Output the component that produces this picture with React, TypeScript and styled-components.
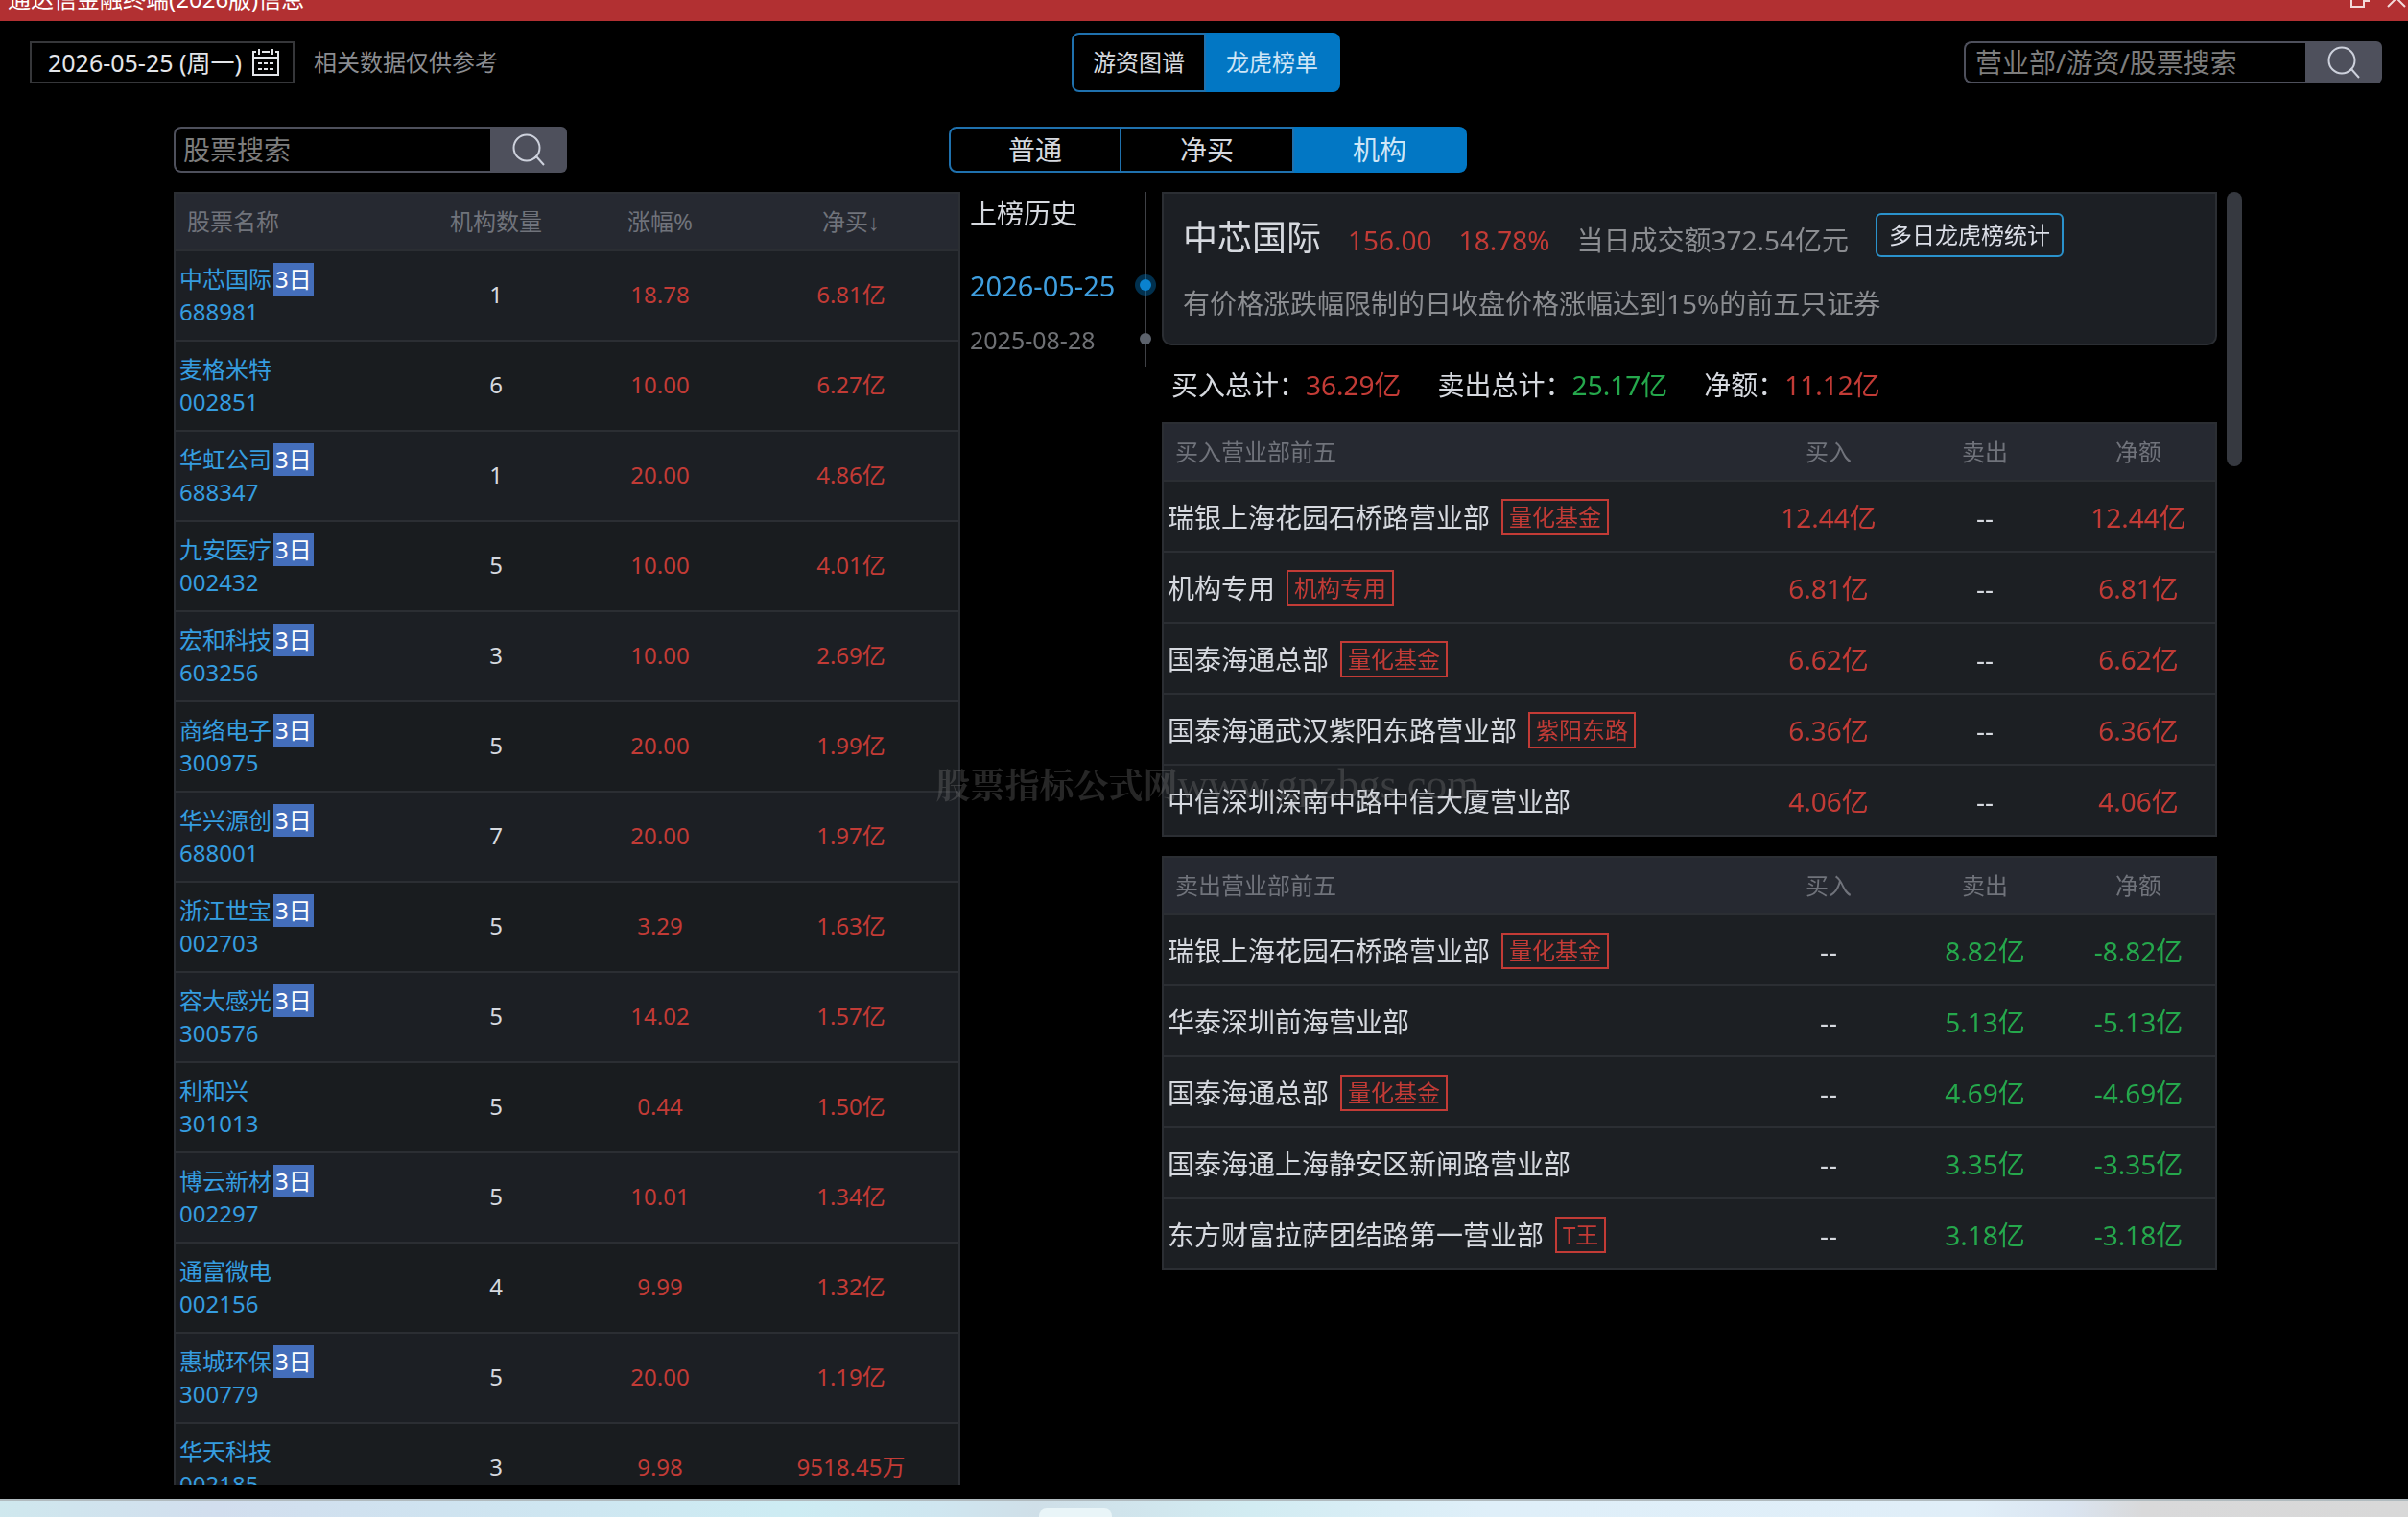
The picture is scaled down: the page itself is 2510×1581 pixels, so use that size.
import React from 'react';
import styled, { createGlobalStyle } from 'styled-components';

const color = {
  up: '#c23b36',
  down: '#25a84c',
  text: '#d6d9df',
  muted: '#8b8d91',
  head: '#70737b',
  link: '#359de0',
  line: '#2b2e33',
  primary: '#0277c4',
  outline: '#1f71ae',
  field: '#4e505c',
};

const GlobalStyle = createGlobalStyle`
  *, *::before, *::after { box-sizing: border-box; }
  body { margin: 0; background: #000; }
  button, input { font: inherit; }
  button { cursor: pointer; }
`;

const Page = styled.div`
  display: flex;
  flex-direction: column;
  height: 100vh;
  overflow: hidden;
  background: #000;
  color: ${color.text};
  font-family: 'Noto Sans', 'Noto Sans CJK SC', sans-serif;
  font-size: 24px;
  line-height: 34px;
`;

const TitleBar = styled.div`
  display: flex;
  flex: none;
  justify-content: space-between;
  align-items: flex-end;
  height: 22px;
  padding: 0 2px 6px 8px;
  overflow: hidden;
  background: #b23032;
  color: #fff;
`;

const WindowButtons = styled.div`
  display: flex;
  gap: 18px;
`;

const WindowButton = styled.button`
  display: flex;
  padding: 0 0 8px;
  border: 0;
  background: none;
  color: #f3dada;
`;

const Header = styled.header`
  display: grid;
  flex: none;
  grid-template-columns: 1fr auto 1fr;
  align-items: center;
  padding: 12px 27px 36px 31px;
`;

const DateGroup = styled.div`
  display: flex;
  align-items: center;
  gap: 20px;
`;

const DateButton = styled.button`
  display: flex;
  align-items: center;
  justify-content: space-between;
  width: 276px;
  height: 44px;
  padding: 0 14px 0 17px;
  border: 2px solid #36373a;
  background: #000;
  color: #e4e6ea;
  font-size: 25px;
  white-space: nowrap;
`;

const Note = styled.span`
  color: ${color.muted};
`;

const Segments = styled.div<{ $large?: boolean }>`
  display: flex;
  font-size: ${(p) => (p.$large ? 28 : 24)}px;
`;

const Segment = styled.button<{ $active?: boolean; $width: number; $height: number }>`
  width: ${(p) => p.$width}px;
  height: ${(p) => p.$height}px;
  padding: 0;
  border: 2px solid ${(p) => (p.$active ? color.primary : color.outline)};
  border-left-width: 0;
  background: ${(p) => (p.$active ? color.primary : '#000')};
  color: ${(p) => (p.$active ? '#cfe6f7' : color.text)};

  &:first-child {
    border-left-width: 2px;
    border-radius: 8px 0 0 8px;
  }
  &:last-child { border-radius: 0 8px 8px 0; }
`;

const SearchBox = styled.form<{ $width: number; $height: number }>`
  display: flex;
  width: ${(p) => p.$width}px;
  height: ${(p) => p.$height}px;
  font-size: 28px;
`;

const SearchInput = styled.input<{ $inset: number }>`
  flex: 1;
  min-width: 0;
  padding: 0 0 0 ${(p) => p.$inset}px;
  border: 2px solid ${color.field};
  border-right: 0;
  border-radius: 8px 0 0 8px;
  outline: 0;
  background: #000;
  color: ${color.text};

  &::placeholder { color: #7d7d7d; opacity: 1; }
`;

const SearchButton = styled.button`
  display: flex;
  align-items: center;
  justify-content: center;
  width: 80px;
  padding: 0;
  border: 0;
  border-radius: 0 6px 6px 0;
  background: ${color.field};
  color: #cdd1dc;
`;

const Tools = styled.div`
  display: grid;
  flex: none;
  grid-template-columns: 1fr auto 1fr;
  padding: 0 173px 20px 181px;
`;

const Main = styled.main`
  display: grid;
  flex: 1;
  grid-template-columns: minmax(0, 820fr) 210px minmax(0, 1126fr);
  min-height: 0;
  padding: 0 173px 14px 181px;
`;

const StockList = styled.section`
  min-height: 0;
  overflow: auto;
  border: 2px solid ${color.line};
  border-bottom: 0;
  scrollbar-width: none;
`;

const Table = styled.table`
  width: 100%;
  border-collapse: separate;
  border-spacing: 0;
  table-layout: fixed;
`;

const HeadCell = styled.th<{ $first?: boolean; $width?: number }>`
  width: ${(p) => (p.$width ? `${p.$width}px` : 'auto')};
  height: 60px;
  padding: ${(p) => (p.$first ? '0 0 0 12px' : '0')};
  border-bottom: 2px solid ${color.line};
  background: #262931;
  color: ${color.head};
  font-weight: 400;
  text-align: ${(p) => (p.$first ? 'left' : 'center')};
`;

const SortArrow = styled.span`
  font-family: 'Liberation Sans', sans-serif;
`;

const StockRow = styled.tr`
  background: #1c1f24;

  &:nth-child(even) { background: #191c1f; }
`;

const StockCell = styled.td<{ $tone?: string }>`
  height: 94px;
  padding: 0 0 2px;
  border-bottom: 2px solid ${color.line};
  color: ${(p) => p.$tone ?? color.text};
  text-align: center;
`;

const StockName = styled.td`
  padding: 12px 0 12px 4px;
  border-bottom: 2px solid ${color.line};
`;

const StockLink = styled.a`
  display: block;
  color: ${color.link};
  text-decoration: none;
`;

const NameLine = styled.span`
  display: flex;
`;

const DaysBadge = styled.span`
  margin-left: 2px;
  padding: 0 2px;
  background: #446ebb;
  color: #fff;
`;

const History = styled.aside`
  position: relative;
  align-self: start;
  height: 182px;
  padding: 4px 16px 0 10px;

  &::after {
    content: '';
    position: absolute;
    top: 0;
    right: 16px;
    width: 2px;
    height: 100%;
    background: #3f4146;
  }
`;

const HistoryTitle = styled.h2`
  margin: 0 0 40px;
  font-size: 28px;
  font-weight: 400;
  line-height: 36px;
`;

const HistoryDates = styled.ul`
  display: flex;
  flex-direction: column;
  gap: 20px;
  margin: 0;
  padding: 0;
  list-style: none;
`;

const HistoryItem = styled.li`
  position: relative;
  display: flex;
  height: 36px;
`;

const HistoryButton = styled.button<{ $active?: boolean }>`
  padding: 0;
  border: 0;
  background: none;
  color: ${(p) => (p.$active ? '#3f9fe0' : '#6f7175')};
  font-size: ${(p) => (p.$active ? 29 : 25)}px;
  line-height: 36px;
`;

const HistoryDot = styled.i<{ $active?: boolean }>`
  position: absolute;
  z-index: 1;
  top: 11px;
  right: -5px;
  width: 12px;
  height: 12px;
  border-radius: 50%;
  background: ${(p) => (p.$active ? '#0a82cf' : '#5c626c')};
  box-shadow: ${(p) => (p.$active ? '0 0 0 5px rgba(2, 119, 196, 0.4)' : 'none')};
`;

const Detail = styled.section`
  display: flex;
  gap: 10px;
  min-height: 0;
`;

const DetailBody = styled.div`
  flex: 1;
  min-width: 0;
`;

const ScrollThumb = styled.div`
  flex: none;
  width: 16px;
  height: 286px;
  border-radius: 8px;
  background: #363940;
`;

const Card = styled.div`
  height: 160px;
  padding: 20px 20px 0;
  border: 2px solid ${color.line};
  border-radius: 0 0 10px 10px;
  background: #1c1f24;
  font-size: 28px;
`;

const CardTop = styled.div`
  display: flex;
  gap: 28px;
  white-space: nowrap;
`;

const Quote = styled.div`
  display: flex;
  align-items: baseline;
  gap: 28px;
  line-height: 52px;
`;

const CardTitle = styled.h1`
  margin: 0;
  font-size: 36px;
  font-weight: 400;
`;

const Tone = styled.span<{ $tone: string }>`
  color: ${(p) => p.$tone};
`;

const StatsButton = styled.button`
  height: 46px;
  padding: 0 12px;
  border: 2px solid #2a92cc;
  border-radius: 6px;
  background: none;
  color: #dcdfe8;
  font-size: 24px;
`;

const Reason = styled.p`
  margin: 22px 0 0;
  color: ${color.muted};
  line-height: 36px;
`;

const Totals = styled.div`
  display: flex;
  align-items: center;
  gap: 38px;
  height: 80px;
  padding: 2px 0 0 10px;
  font-size: 28px;
  white-space: nowrap;
`;

const BrokerPanel = styled.div`
  border: 2px solid ${color.line};
  border-bottom: 0;

  & + & { margin-top: 20px; }
`;

const BrokerCell = styled.td<{ $tone?: string }>`
  height: 74px;
  padding: 2px 0 0;
  border-bottom: 2px solid ${color.line};
  background: #1c1f23;
  color: ${(p) => p.$tone ?? color.text};
  font-size: 28px;
  text-align: center;
`;

const BrokerName = styled(BrokerCell)`
  padding-left: 4px;
  text-align: left;
`;

const BrokerLine = styled.div`
  display: flex;
  align-items: flex-end;
  gap: 12px;
  line-height: 38px;
  white-space: nowrap;
`;

const Tag = styled.span`
  padding: 0 6px;
  border: 2px solid ${color.up};
  color: ${color.up};
  font-size: 24px;
  line-height: 34px;
`;

const Watermark = styled.div`
  position: fixed;
  top: 794px;
  left: 8px;
  right: 0;
  color: rgba(140, 140, 140, 0.28);
  font-family: 'Liberation Serif', 'Noto Serif CJK SC', 'Noto Sans CJK SC', serif;
  font-size: 36px;
  line-height: 48px;
  text-align: center;
  pointer-events: none;
`;

const WatermarkName = styled.span`
  font-weight: 700;
`;

const WatermarkSite = styled.span`
  font-size: 44px;
`;

const Taskbar = styled.footer`
  display: flex;
  flex: none;
  height: 19px;
  padding: 8px 0 0 1083px;
  border-top: 2px solid #b1bbbf;
  background: linear-gradient(90deg, #cfe8ee 0%, #d2deee 9%, #cfe3f0 18%, #cdecf3 33%, #cfe6f0 39%, #cfdfe8 43%, #d2ecf2 52%, #dfeff9 62%, #e0eef8 82%, #dae4f0 86%, #d9d9da 89%, #d8d8d8 100%);
`;

const TaskButton = styled.button`
  width: 76px;
  padding: 0;
  border: 0;
  border-radius: 8px 8px 0 0;
  background: #e9f5f8;
`;

const HeaderEnd = styled.div`
  justify-self: end;
`;

const SearchIcon = () => (
  <svg width="34" height="34" viewBox="0 0 34 34" fill="none" stroke="currentColor" strokeWidth="2" aria-hidden>
    <circle cx="15" cy="15" r="13.5" />
    <path d="M23 26 25 24 33 33" />
  </svg>
);

const CalendarIcon = () => (
  <svg width="28" height="28" viewBox="0 0 28 28" fill="none" stroke="currentColor" strokeWidth="2" aria-hidden>
    <path d="M4 3H1V27H27V3H24M10 3H18M1 9H27M7 0V6M21 0V6M6 15H10M12 15H16M18 15H22M6 21H10M12 21H16M18 21H22" />
  </svg>
);

const RestoreIcon = () => (
  <svg width="20" height="20" viewBox="0 0 20 20" fill="none" stroke="currentColor" strokeWidth="2" aria-hidden>
    <path d="M1 6H14V19H1ZM6 6V1H19V13H14" />
  </svg>
);

const CloseIcon = () => (
  <svg width="20" height="20" viewBox="0 0 20 20" fill="none" stroke="currentColor" strokeWidth="2" aria-hidden>
    <path d="M1 1 19 19M19 1 1 19" />
  </svg>
);

type Stock = { name: string; code: string; days?: boolean; count: number; change: string; net: string };

const stocks: Stock[] = [
  { name: '中芯国际', code: '688981', days: true, count: 1, change: '18.78', net: '6.81亿' },
  { name: '麦格米特', code: '002851', count: 6, change: '10.00', net: '6.27亿' },
  { name: '华虹公司', code: '688347', days: true, count: 1, change: '20.00', net: '4.86亿' },
  { name: '九安医疗', code: '002432', days: true, count: 5, change: '10.00', net: '4.01亿' },
  { name: '宏和科技', code: '603256', days: true, count: 3, change: '10.00', net: '2.69亿' },
  { name: '商络电子', code: '300975', days: true, count: 5, change: '20.00', net: '1.99亿' },
  { name: '华兴源创', code: '688001', days: true, count: 7, change: '20.00', net: '1.97亿' },
  { name: '浙江世宝', code: '002703', days: true, count: 5, change: '3.29', net: '1.63亿' },
  { name: '容大感光', code: '300576', days: true, count: 5, change: '14.02', net: '1.57亿' },
  { name: '利和兴', code: '301013', count: 5, change: '0.44', net: '1.50亿' },
  { name: '博云新材', code: '002297', days: true, count: 5, change: '10.01', net: '1.34亿' },
  { name: '通富微电', code: '002156', count: 4, change: '9.99', net: '1.32亿' },
  { name: '惠城环保', code: '300779', days: true, count: 5, change: '20.00', net: '1.19亿' },
  { name: '华天科技', code: '002185', count: 3, change: '9.98', net: '9518.45万' },
];

type Broker = { name: string; tag?: string; buy: string; sell: string; net: string };

const buyers: Broker[] = [
  { name: '瑞银上海花园石桥路营业部', tag: '量化基金', buy: '12.44亿', sell: '--', net: '12.44亿' },
  { name: '机构专用', tag: '机构专用', buy: '6.81亿', sell: '--', net: '6.81亿' },
  { name: '国泰海通总部', tag: '量化基金', buy: '6.62亿', sell: '--', net: '6.62亿' },
  { name: '国泰海通武汉紫阳东路营业部', tag: '紫阳东路', buy: '6.36亿', sell: '--', net: '6.36亿' },
  { name: '中信深圳深南中路中信大厦营业部', buy: '4.06亿', sell: '--', net: '4.06亿' },
];

const sellers: Broker[] = [
  { name: '瑞银上海花园石桥路营业部', tag: '量化基金', buy: '--', sell: '8.82亿', net: '-8.82亿' },
  { name: '华泰深圳前海营业部', buy: '--', sell: '5.13亿', net: '-5.13亿' },
  { name: '国泰海通总部', tag: '量化基金', buy: '--', sell: '4.69亿', net: '-4.69亿' },
  { name: '国泰海通上海静安区新闸路营业部', buy: '--', sell: '3.35亿', net: '-3.35亿' },
  { name: '东方财富拉萨团结路第一营业部', tag: 'T王', buy: '--', sell: '3.18亿', net: '-3.18亿' },
];

const Brokers = ({ title, rows }: { title: string; rows: Broker[] }) => (
  <BrokerPanel>
    <Table>
      <thead>
        <tr>
          <HeadCell $first>{title}</HeadCell>
          <HeadCell $width={166}>买入</HeadCell>
          <HeadCell $width={160}>卖出</HeadCell>
          <HeadCell $width={160}>净额</HeadCell>
        </tr>
      </thead>
      <tbody>
        {rows.map((row) => (
          <tr key={row.name}>
            <BrokerName>
              <BrokerLine>
                {row.name}
                {row.tag && <Tag>{row.tag}</Tag>}
              </BrokerLine>
            </BrokerName>
            <BrokerCell $tone={row.buy === '--' ? undefined : color.up}>{row.buy}</BrokerCell>
            <BrokerCell $tone={row.sell === '--' ? undefined : color.down}>{row.sell}</BrokerCell>
            <BrokerCell $tone={row.net.startsWith('-') ? color.down : color.up}>{row.net}</BrokerCell>
          </tr>
        ))}
      </tbody>
    </Table>
  </BrokerPanel>
);

const Search = ({ label, width, height, inset }: { label: string; width: number; height: number; inset: number }) => (
  <SearchBox $width={width} $height={height} onSubmit={(e) => e.preventDefault()}>
    <SearchInput $inset={inset} placeholder={label} aria-label={label} />
    <SearchButton type="submit" aria-label="搜索">
      <SearchIcon />
    </SearchButton>
  </SearchBox>
);

export default function App() {
  return (
    <Page>
      <GlobalStyle />
      <TitleBar>
        <span>通达信金融终端(2026版)信息</span>
        <WindowButtons>
          <WindowButton aria-label="还原"><RestoreIcon /></WindowButton>
          <WindowButton aria-label="关闭"><CloseIcon /></WindowButton>
        </WindowButtons>
      </TitleBar>

      <Header>
        <DateGroup>
          <DateButton>
            2026-05-25 (周一)
            <CalendarIcon />
          </DateButton>
          <Note>相关数据仅供参考</Note>
        </DateGroup>
        <Segments>
          <Segment $width={140} $height={62}>游资图谱</Segment>
          <Segment $width={140} $height={62} $active>龙虎榜单</Segment>
        </Segments>
        <HeaderEnd>
          <Search label="营业部/游资/股票搜索" width={436} height={44} inset={10} />
        </HeaderEnd>
      </Header>

      <Tools>
        <Search label="股票搜索" width={410} height={48} inset={8} />
        <Segments $large>
          <Segment $width={180} $height={48}>普通</Segment>
          <Segment $width={180} $height={48}>净买</Segment>
          <Segment $width={180} $height={48} $active>机构</Segment>
        </Segments>
      </Tools>

      <Main>
        <StockList>
          <Table>
            <thead>
              <tr>
                <HeadCell $first>股票名称</HeadCell>
                <HeadCell $width={168}>机构数量</HeadCell>
                <HeadCell $width={174}>涨幅%</HeadCell>
                <HeadCell $width={224}>净买<SortArrow>↓</SortArrow></HeadCell>
              </tr>
            </thead>
            <tbody>
              {stocks.map((s) => (
                <StockRow key={s.code}>
                  <StockName>
                    <StockLink href={`#${s.code}`}>
                      <NameLine>
                        {s.name}
                        {s.days && <DaysBadge>3日</DaysBadge>}
                      </NameLine>
                      {s.code}
                    </StockLink>
                  </StockName>
                  <StockCell>{s.count}</StockCell>
                  <StockCell $tone={color.up}>{s.change}</StockCell>
                  <StockCell $tone={color.up}>{s.net}</StockCell>
                </StockRow>
              ))}
            </tbody>
          </Table>
        </StockList>

        <History>
          <HistoryTitle>上榜历史</HistoryTitle>
          <HistoryDates>
            <HistoryItem>
              <HistoryButton $active>2026-05-25</HistoryButton>
              <HistoryDot $active />
            </HistoryItem>
            <HistoryItem>
              <HistoryButton>2025-08-28</HistoryButton>
              <HistoryDot />
            </HistoryItem>
          </HistoryDates>
        </History>

        <Detail>
          <DetailBody>
            <Card>
              <CardTop>
                <Quote>
                  <CardTitle>中芯国际</CardTitle>
                  <Tone $tone={color.up}>156.00</Tone>
                  <Tone $tone={color.up}>18.78%</Tone>
                  <Tone $tone={color.muted}>当日成交额372.54亿元</Tone>
                </Quote>
                <StatsButton>多日龙虎榜统计</StatsButton>
              </CardTop>
              <Reason>有价格涨跌幅限制的日收盘价格涨幅达到15%的前五只证券</Reason>
            </Card>
            <Totals>
              <span>买入总计：<Tone $tone={color.up}>36.29亿</Tone></span>
              <span>卖出总计：<Tone $tone={color.down}>25.17亿</Tone></span>
              <span>净额：<Tone $tone={color.up}>11.12亿</Tone></span>
            </Totals>
            <Brokers title="买入营业部前五" rows={buyers} />
            <Brokers title="卖出营业部前五" rows={sellers} />
          </DetailBody>
          <ScrollThumb />
        </Detail>
      </Main>

      <Watermark>
        <WatermarkName>股票指标公式网</WatermarkName>
        <WatermarkSite>www.gpzbgs.com</WatermarkSite>
      </Watermark>

      <Taskbar>
        <TaskButton aria-label="任务" />
      </Taskbar>
    </Page>
  );
}
